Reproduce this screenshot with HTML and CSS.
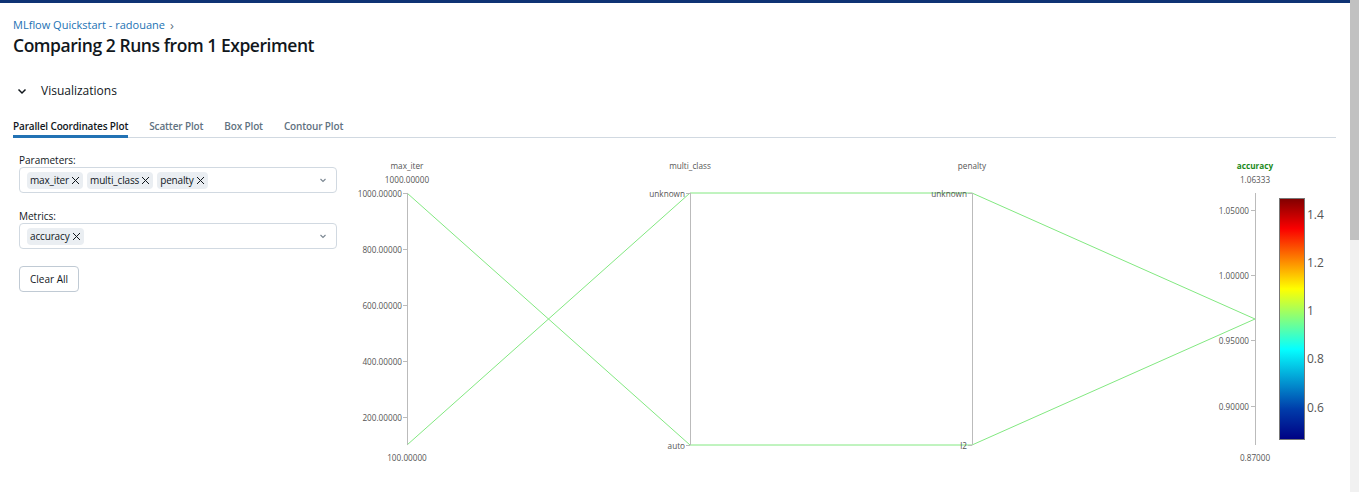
FILE: index.html
```html
<!DOCTYPE html>
<html>
<head>
<meta charset="utf-8">
<link rel="stylesheet" href="styles.css">
</head>
<body>
<div class="frame">
  <div class="page">
    <div class="topbar"></div>
    <div class="content">
      <div class="breadcrumb"><a class="crumb">MLflow Quickstart - radouane</a><span class="sep">›</span></div>
      <h1 class="title">Comparing 2 Runs from 1 Experiment</h1>
      <div class="section-head">
        <svg class="chev" width="10" height="10" viewBox="0 0 10 10"><path d="M1.5 3.5 L5 7 L8.5 3.5" fill="none" stroke="#11171c" stroke-width="1.5"/></svg>
        <span>Visualizations</span>
      </div>
      <div class="tabs">
        <div class="tab active">Parallel Coordinates Plot</div>
        <div class="tab">Scatter Plot</div>
        <div class="tab">Box Plot</div>
        <div class="tab">Contour Plot</div>
      </div>
      <div class="body-row">
        <div class="controls">
          <div class="field">
            <div class="label">Parameters:</div>
            <div class="select">
              <div class="tags">
                <span class="tag">max_iter<svg class="x" width="9" height="9" viewBox="0 0 9 9"><path d="M1 1 L8 8 M8 1 L1 8" stroke="#11171c" stroke-width="1"/></svg></span>
                <span class="tag">multi_class<svg class="x" width="9" height="9" viewBox="0 0 9 9"><path d="M1 1 L8 8 M8 1 L1 8" stroke="#11171c" stroke-width="1"/></svg></span>
                <span class="tag">penalty<svg class="x" width="9" height="9" viewBox="0 0 9 9"><path d="M1 1 L8 8 M8 1 L1 8" stroke="#11171c" stroke-width="1"/></svg></span>
              </div>
              <svg class="caret" width="10" height="10" viewBox="0 0 10 10"><path d="M2.5 4 L5 6.5 L7.5 4" fill="none" stroke="#7a8691" stroke-width="1.1"/></svg>
            </div>
          </div>
          <div class="field">
            <div class="label">Metrics:</div>
            <div class="select">
              <div class="tags">
                <span class="tag">accuracy<svg class="x" width="9" height="9" viewBox="0 0 9 9"><path d="M1 1 L8 8 M8 1 L1 8" stroke="#11171c" stroke-width="1"/></svg></span>
              </div>
              <svg class="caret" width="10" height="10" viewBox="0 0 10 10"><path d="M2.5 4 L5 6.5 L7.5 4" fill="none" stroke="#7a8691" stroke-width="1.1"/></svg>
            </div>
          </div>
          <button class="btn">Clear All</button>
        </div>
        <svg class="plot" width="990" height="352" viewBox="0 0 990 352">
          <defs>
            <linearGradient id="jet" x1="0" y1="0" x2="0" y2="1">
              <stop offset="0" stop-color="rgb(128,0,0)"/>
              <stop offset="0.125" stop-color="rgb(250,0,0)"/>
              <stop offset="0.375" stop-color="rgb(255,255,0)"/>
              <stop offset="0.625" stop-color="rgb(5,255,255)"/>
              <stop offset="0.875" stop-color="rgb(0,60,170)"/>
              <stop offset="1" stop-color="rgb(0,0,131)"/>
            </linearGradient>
          </defs>
          <g class="lines">
            <polyline points="67,55 350,307 632,307 915,181"/>
            <polyline points="67,307 350,55 632,55 915,181"/>
          </g>
          <g class="axes">
            <line x1="67.5" y1="55" x2="67.5" y2="307"/>
            <line x1="350.5" y1="55" x2="350.5" y2="307"/>
            <line x1="632.5" y1="55" x2="632.5" y2="307"/>
            <line x1="915.5" y1="55" x2="915.5" y2="307"/>
            <line x1="63" y1="55.5" x2="67" y2="55.5"/>
            <line x1="63" y1="111.5" x2="67" y2="111.5"/>
            <line x1="63" y1="167.5" x2="67" y2="167.5"/>
            <line x1="63" y1="223.5" x2="67" y2="223.5"/>
            <line x1="63" y1="279.5" x2="67" y2="279.5"/>
            <line x1="346" y1="55.5" x2="350" y2="55.5"/>
            <line x1="346" y1="307.5" x2="350" y2="307.5"/>
            <line x1="628" y1="55.5" x2="632" y2="55.5"/>
            <line x1="628" y1="307.5" x2="632" y2="307.5"/>
            <line x1="911" y1="72.5" x2="915" y2="72.5"/>
            <line x1="911" y1="137.5" x2="915" y2="137.5"/>
            <line x1="911" y1="202.5" x2="915" y2="202.5"/>
            <line x1="911" y1="268.5" x2="915" y2="268.5"/>
          </g>
          <g class="ticks">
            <text x="62" y="55">1000.00000</text>
            <text x="62" y="111">800.00000</text>
            <text x="62" y="167">600.00000</text>
            <text x="62" y="223">400.00000</text>
            <text x="62" y="279">200.00000</text>
            <text x="345" y="55">unknown</text>
            <text x="345" y="307">auto</text>
            <text x="627" y="55">unknown</text>
            <text x="627" y="307">l2</text>
            <text x="909" y="72">1.05000</text>
            <text x="909" y="137">1.00000</text>
            <text x="909" y="202">0.95000</text>
            <text x="909" y="268">0.90000</text>
          </g>
          <g class="axtitle">
            <text x="67" y="31">max_iter</text>
            <text x="350" y="31">multi_class</text>
            <text x="632" y="31">penalty</text>
            <text x="915" y="31" class="green">accuracy</text>
          </g>
          <g class="range">
            <text x="67" y="45">1000.00000</text>
            <text x="67" y="323">100.00000</text>
            <text x="915" y="45">1.06333</text>
            <text x="915" y="323">0.87000</text>
          </g>
          <rect x="939.5" y="60.5" width="25" height="241" fill="url(#jet)" stroke="#777" stroke-width="1"/>
          <g class="cbticks">
            <text x="967" y="76">1.4</text>
            <text x="967" y="124">1.2</text>
            <text x="967" y="172">1</text>
            <text x="967" y="220">0.8</text>
            <text x="967" y="269">0.6</text>
          </g>
        </svg>
      </div>
    </div>
  </div>
  <div class="scrollbar"><div class="thumb"></div></div>
</div>
</body>
</html>
```

FILE: styles.css
```css
* { box-sizing: border-box; }
html, body { margin: 0; padding: 0; background: #fff; }
body {
  font-family: "Open Sans", "Noto Sans", sans-serif;
  color: #11171c;
  overflow: hidden;
}
.frame {
  display: flex;
  width: 1359px;
  height: 492px;
}
.page {
  width: 1350px;
  height: 492px;
  overflow: hidden;
}
.scrollbar {
  width: 9px;
  height: 492px;
  background: #f1f1f1;
}
.thumb {
  width: 9px;
  height: 240px;
  background: #c1c1c1;
}
.topbar {
  height: 3px;
  background: #0e3374;
}
.content {
  padding: 14px 14px 0 13px;
}
.breadcrumb {
  font-size: 11px;
  line-height: 16px;
  display: flex;
  align-items: center;
  gap: 5px;
}
.crumb { color: #2272b4; }
.sep { color: #5f7281; font-size: 13px; }
.title {
  margin: 0;
  font-size: 17.5px;
  font-weight: 600;
  line-height: 25px;
  letter-spacing: -0.45px;
}
.section-head {
  margin-top: 23px;
  display: flex;
  align-items: center;
  gap: 14px;
  font-size: 12px;
  line-height: 20px;
  padding-left: 4px;
}
.chev { display: block; }
.tabs {
  margin-top: 18px;
  display: flex;
  gap: 21px;
  border-bottom: 1px solid #d1d9e1;
}
.tab {
  font-size: 10px;
  font-weight: 600;
  color: #5f7281;
  line-height: 14px;
  padding-bottom: 2px;
  border-bottom: 3px solid transparent;
  margin-bottom: -1px;
  letter-spacing: -0.15px;
}
.tab.active {
  color: #11171c;
  border-bottom-color: #2272b4;
}
.body-row {
  display: flex;
  align-items: flex-start;
}
.controls {
  flex-shrink: 0;
  width: 327px;
  padding: 16px 0 0 6px;
  display: flex;
  flex-direction: column;
  align-items: flex-start;
}
.field { width: 318px; margin-bottom: 17px; }
.label {
  font-size: 10px;
  line-height: 12px;
  margin-bottom: 1px;
}
.select {
  height: 26px;
  border: 1px solid #d1d9e1;
  border-radius: 4px;
  display: flex;
  align-items: center;
  justify-content: space-between;
  padding: 0 8px 0 7px;
}
.tags { display: flex; gap: 4px; }
.tag {
  display: flex;
  align-items: center;
  gap: 2px;
  background: #eaeef2;
  border-radius: 4px;
  font-size: 10px;
  letter-spacing: -0.15px;
  line-height: 17px;
  padding: 0 3px 0 3px;
  white-space: nowrap;
}
.x { display: block; }
.caret { display: block; }
.btn {
  font-family: inherit;
  font-size: 10px;
  color: #11171c;
  background: #fff;
  border: 1px solid #c0cad4;
  border-radius: 4px;
  height: 26px;
  padding: 0 10px;
  margin-top: 0;
}
.plot {
  display: block;
  flex-shrink: 0;
  font-family: "Open Sans", sans-serif;
}
.lines polyline {
  fill: none;
  stroke: rgb(130, 232, 128);
  stroke-width: 1;
}
.axes line {
  stroke: #bbb;
  stroke-width: 1;
}
.ticks text {
  font-size: 8.2px;
  fill: #555;
  text-anchor: end;
  dominant-baseline: central;
}
.axtitle text {
  font-size: 8.2px;
  fill: #555;
  text-anchor: middle;
}
.axtitle text.green {
  fill: #1b8a1b;
  font-weight: 700;
}
.range text {
  font-size: 8.2px;
  fill: #555;
  text-anchor: middle;
}
.cbticks text {
  font-size: 12px;
  fill: #555;
  dominant-baseline: central;
}
```
